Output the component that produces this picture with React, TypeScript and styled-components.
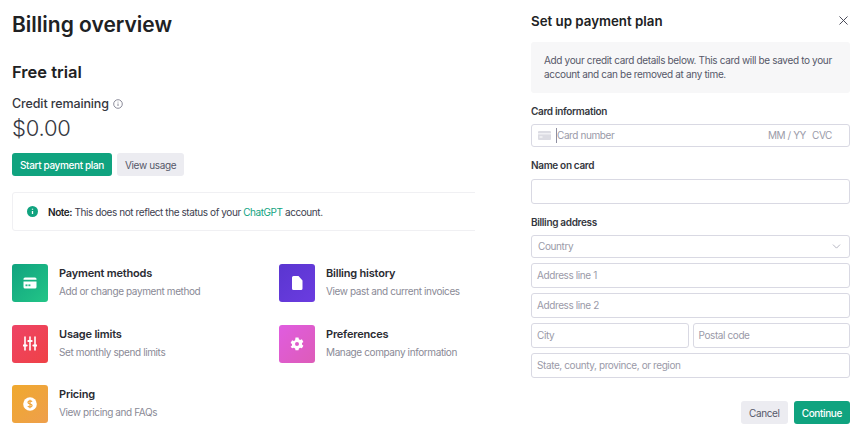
import React from "react";
import styled, { createGlobalStyle } from "styled-components";
import { ChevronDown, X } from "lucide-react";

const GlobalStyle = createGlobalStyle`
  html, body {
    margin: 0;
    padding: 0;
    background: #fff;
    font-family: Inter, "Liberation Sans", sans-serif;
    color: #202123;
  }
  * {
    box-sizing: border-box;
  }
`;

const Page = styled.div`
  width: 865px;
  height: 438px;
  display: flex;
  overflow: hidden;
`;

const Overview = styled.main`
  width: 475px;
  padding: 11px 0 0 12px;
  overflow: hidden;
`;

const Title = styled.h1`
  margin: 0;
  font-size: 21px;
  line-height: 27px;
  font-weight: 600;
  color: #202123;
`;

const PlanName = styled.h2`
  margin: 23px 0 0;
  font-size: 16.5px;
  line-height: 22px;
  font-weight: 600;
`;

const CreditRow = styled.div`
  margin-top: 12px;
  display: flex;
  align-items: center;
  gap: 4px;
  font-size: 12.5px;
  line-height: 18px;
  font-weight: 500;
  letter-spacing: -0.12px;
  color: #353740;
`;

const Amount = styled.div`
  margin-top: 1px;
  font-size: 22px;
  line-height: 29px;
  font-weight: 300;
  letter-spacing: -0.2px;
  color: #353740;
`;

const Button = styled.button<{ $primary?: boolean }>`
  height: 23px;
  padding: 0 8px;
  border: 0;
  border-radius: 3px;
  font-family: inherit;
  font-size: 10px;
  font-weight: ${({ $primary }) => ($primary ? 500 : 400)};
  letter-spacing: ${({ $primary }) => ($primary ? "-0.36px" : "-0.36px")};
  background: ${({ $primary }) => ($primary ? "#10a37f" : "#ececf1")};
  color: ${({ $primary }) => ($primary ? "#fff" : "#565869")};
`;

const ButtonRow = styled.div<{ $end?: boolean }>`
  display: flex;
  gap: ${({ $end }) => ($end ? "6px" : "5px")};
  justify-content: ${({ $end }) => ($end ? "flex-end" : "flex-start")};
  margin-top: ${({ $end }) => ($end ? "23px" : "10px")};
`;

const Note = styled.div`
  width: 480px;
  height: 39px;
  margin-top: 16px;
  padding-left: 14px;
  display: flex;
  align-items: center;
  gap: 10px;
  border: 1px solid #f0f0f3;
  border-radius: 3px;
  font-size: 10px;
  letter-spacing: -0.42px;
  color: #40414f;
  b {
    font-weight: 600;
    color: #202123;
  }
  span span {
    color: #10a37f;
  }
`;

const Links = styled.div`
  margin-top: 33px;
  display: grid;
  grid-template-columns: 267px 1fr;
  row-gap: 22.5px;
`;

const LinkItem = styled.div`
  display: flex;
  gap: 11px;
  height: 38px;
`;

const Tile = styled.div<{ $from: string; $to: string }>`
  width: 36px;
  height: 38px;
  border-radius: 3px;
  display: flex;
  align-items: center;
  justify-content: center;
  background: linear-gradient(135deg, ${({ $from }) => $from}, ${({ $to }) => $to});
`;

const LinkText = styled.div`
  padding-top: 1px;
`;

const LinkTitle = styled.div`
  font-size: 11px;
  line-height: 17px;
  font-weight: 600;
  letter-spacing: -0.2px;
  color: #2a2b32;
`;

const LinkSub = styled.div`
  font-size: 10px;
  line-height: 18px;
  letter-spacing: -0.39px;
  color: #8a8a96;
`;

const Panel = styled.aside`
  width: 319px;
  margin-left: 56px;
  padding-top: 9px;
`;

const PanelHead = styled.div`
  height: 23px;
  display: flex;
  align-items: center;
  justify-content: space-between;
`;

const PanelTitle = styled.h3`
  margin: 0;
  font-size: 13.3px;
  font-weight: 600;
  color: #202123;
`;

const CloseButton = styled.div`
  display: flex;
  color: #40414f;
  margin-right: -1px;
`;

const Info = styled.div`
  height: 51px;
  margin-top: 10px;
  padding: 11px 13px;
  border-radius: 3px;
  background: #f7f7f8;
  font-size: 10px;
  line-height: 14px;
  letter-spacing: -0.34px;
  color: #565869;
`;

const Label = styled.div<{ $top: number; $bottom?: number }>`
  margin-top: ${({ $top }) => $top}px;
  margin-bottom: ${({ $bottom }) => $bottom ?? 6}px;
  font-size: 10px;
  line-height: 14px;
  font-weight: 600;
  letter-spacing: -0.33px;
  color: #353740;
`;

const Field = styled.div<{ $height?: number; $inset?: number }>`
  width: 100%;
  height: ${({ $height }) => $height ?? 25}px;
  display: flex;
  align-items: center;
  justify-content: space-between;
  padding: 0 ${({ $inset }) => $inset ?? 5}px 1px;
  border: 1px solid #d9d9e3;
  border-radius: 3px;
  font-size: 10px;
  letter-spacing: -0.4px;
  color: #9a9aa8;
`;

const Cluster = styled.div`
  display: flex;
  align-items: center;
`;

const Caret = styled.span`
  width: 1px;
  height: 15px;
  margin: 0 0 0 5px;
  background: #8e8ea0;
`;

const CardHints = styled.div`
  display: flex;
  gap: 6px;
  margin-right: 11px;
`;

const AddressStack = styled.div`
  display: flex;
  flex-direction: column;
  gap: 5px;
`;

const AddressRow = styled.div`
  display: flex;
  gap: 4px;
`;

const links = [
  {
    title: "Payment methods",
    sub: "Add or change payment method",
    from: "#10a37f",
    to: "#23c587",
    icon: (
      <svg width="14" height="12" viewBox="0 0 14 12" fill="#fff">
        <path d="M2 0.5h10a1.5 1.5 0 0 1 1.5 1.5v0.8H0.5V2A1.5 1.5 0 0 1 2 .5zM0.5 4.6h13V10a1.5 1.5 0 0 1-1.5 1.5H2A1.5 1.5 0 0 1 .5 10z" />
        <rect x="2.5" y="7.4" width="2" height="1.8" fill="#2cb98a" />
        <rect x="5.4" y="7.4" width="2" height="1.8" fill="#2cb98a" />
      </svg>
    ),
  },
  {
    title: "Billing history",
    sub: "View past and current invoices",
    from: "#5a36d0",
    to: "#6b3ce0",
    icon: (
      <svg width="11" height="14" viewBox="0 0 11 14" fill="#fff">
        <path d="M1.5 0H6.5L10.500 4.500V12.500A1.500 1.500 0 0 1 9 14H1.500A1.500 1.500 0 0 1 0 12.500V1.500A1.500 1.500 0 0 1 1.500 0z" />
      </svg>
    ),
  },
  {
    title: "Usage limits",
    sub: "Set monthly spend limits",
    from: "#ee4466",
    to: "#ef4146",
    icon: (
      <svg width="14" height="15" viewBox="0 0 14 15" stroke="#fff" strokeWidth="1.6" fill="#fff" strokeLinecap="round">
        <path d="M2 1v13M7 1v13M12 1v13" />
        <path d="M.4 9.500h3.200M5.400 5h3.200M10.400 9.500h3.200" strokeWidth="2.200" />
      </svg>
    ),
  },
  {
    title: "Preferences",
    sub: "Manage company information",
    from: "#e05ce0",
    to: "#dd5cb8",
    icon: (
      <svg width="14" height="14" viewBox="0 0 14 14">
        <path
          fill="#fff"
          fillRule="evenodd"
          d="M5.500.4h3l.4 1.800 1.200.7 1.800-.6 1.500 2.600-1.400 1.200v1.400l1.400 1.200-1.500 2.600-1.800-.6-1.200.7-.4 1.800h-3l-.4-1.800-1.200-.7-1.800.6L.6 9.700 2 8.500V7.100L.6 5.900l1.500-2.600 1.800.6 1.200-.7zM7 5a2 2 0 1 0 0 4 2 2 0 0 0 0-4z"
        />
      </svg>
    ),
  },
  {
    title: "Pricing",
    sub: "View pricing and FAQs",
    from: "#f0a92e",
    to: "#ee9f4c",
    icon: (
      <svg width="14" height="14" viewBox="0 0 14 14">
        <circle cx="7" cy="7" r="6.800" fill="#fff" />
        <path
          d="M9 4.800C8.600 4.100 7.900 3.900 7 3.900c-1.100 0-2 .5-2 1.500 0 2.200 4.100 1 4.100 3.200 0 1-.9 1.500-2.100 1.500-1 0-1.800-.4-2.200-1.100M7 2.800v8.400"
          fill="none"
          stroke="#f0a53a"
          strokeWidth="1.200"
        />
      </svg>
    ),
  },
];

export default function App() {
  return (
    <Page>
      <GlobalStyle />
      <Overview>
        <Title>Billing overview</Title>
        <PlanName>Free trial</PlanName>
        <CreditRow>
          Credit remaining
          <svg width="10" height="10" viewBox="0 0 10 10" fill="none" stroke="#6e6e80" strokeWidth="0.8">
            <circle cx="5" cy="5" r="4.300" />
            <path d="M5 4.500v2.500M5 2.700v.8" />
          </svg>
        </CreditRow>
        <Amount>$0.00</Amount>
        <ButtonRow>
          <Button $primary>Start payment plan</Button>
          <Button>View usage</Button>
        </ButtonRow>
        <Note>
          <svg width="11" height="11" viewBox="0 0 11 11">
            <circle cx="5.500" cy="5.500" r="5.500" fill="#10a37f" />
            <path d="M5.500 5v3M5.500 2.800v.9" stroke="#fff" strokeWidth="1.300" />
          </svg>
          <span>
            <b>Note:</b> This does not reflect the status of your <span>ChatGPT</span> account.
          </span>
        </Note>
        <Links>
          {links.map((link) => (
            <LinkItem key={link.title}>
              <Tile $from={link.from} $to={link.to}>
                {link.icon}
              </Tile>
              <LinkText>
                <LinkTitle>{link.title}</LinkTitle>
                <LinkSub>{link.sub}</LinkSub>
              </LinkText>
            </LinkItem>
          ))}
        </Links>
      </Overview>
      <Panel>
        <PanelHead>
          <PanelTitle>Set up payment plan</PanelTitle>
          <CloseButton>
            <X size={15} strokeWidth={1.500} />
          </CloseButton>
        </PanelHead>
        <Info>
          Add your credit card details below. This card will be saved to your account and can be removed at any time.
        </Info>
        <Label $top={11}>Card information</Label>
        <Field $height={23} $inset={6}>
          <Cluster>
            <svg width="13" height="9" viewBox="0 0 13 9">
              <rect width="13" height="9" rx="1" fill="#dcdce3" />
              <rect y="2" width="13" height="1.500" fill="#f0f0f4" />
              <rect x="1.500" y="5.500" width="3" height="1" fill="#fff" />
            </svg>
            <Caret />
            <span>Card number</span>
          </Cluster>
          <CardHints>
            <span>MM / YY</span>
            <span>CVC</span>
          </CardHints>
        </Field>
        <Label $top={11} $bottom={7}>Name on card</Label>
        <Field />
        <Label $top={11}>Billing address</Label>
        <AddressStack>
          <Field $height={23} $inset={6}>
            Country
            <ChevronDown size={13} strokeWidth={1.200} color="#8e8ea0" />
          </Field>
          <Field>Address line 1</Field>
          <Field>Address line 2</Field>
          <AddressRow>
            <Field>City</Field>
            <Field>Postal code</Field>
          </AddressRow>
          <Field>State, county, province, or region</Field>
        </AddressStack>
        <ButtonRow $end>
          <Button>Cancel</Button>
          <Button $primary>Continue</Button>
        </ButtonRow>
      </Panel>
    </Page>
  );
}
